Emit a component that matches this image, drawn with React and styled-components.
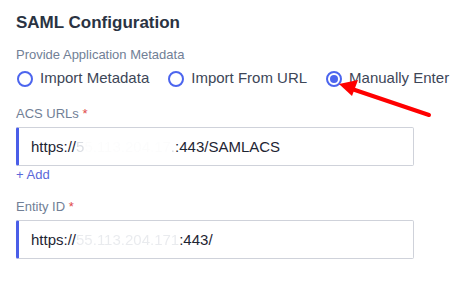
import styled, { createGlobalStyle } from 'styled-components';

const GlobalStyle = createGlobalStyle`
    body {
        margin: 0;
        background: #fff;
        font-family: "Liberation Sans", Arial, sans-serif;
    }
`;

export default function App() {
    return (
        <Page>
            <GlobalStyle />
            <Title>SAML Configuration</Title>

            <GroupLabel>Provide Application Metadata</GroupLabel>
            <RadioRow>
                <RadioOption>
                    <RadioCircle />
                    Import Metadata
                </RadioOption>
                <RadioOption>
                    <RadioCircle />
                    Import From URL
                </RadioOption>
                <RadioOption>
                    <RadioCircle checked />
                    Manually Enter
                </RadioOption>
            </RadioRow>

            <FieldLabel top={18}>ACS URLs <Star>*</Star></FieldLabel>
            <InputBox>
                https://<Hidden fade={0.3}>5</Hidden><Hidden fade={0.02}>5.113.204.17</Hidden><Hidden fade={0.3}>.</Hidden>:443/SAMLACS
            </InputBox>
            <AddLink>+ Add</AddLink>

            <FieldLabel top={16}>Entity ID <Star>*</Star></FieldLabel>
            <InputBox>
                https://<Hidden fade={0.18}>55.113.204.171</Hidden>:443/
            </InputBox>

            <Arrow width="460" height="284" viewBox="0 0 460 284">
                <line x1="429" y1="115" x2="352" y2="89" stroke="#f00" strokeWidth="4" strokeLinecap="round" />
                <polygon points="339,84 358,80 352,96" fill="#f00" />
            </Arrow>
        </Page>
    );
}

const Page = styled.div`
    position: relative;
    width: 460px;
    height: 284px;
    padding: 13px 16px 0;
    box-sizing: border-box;
    display: flex;
    flex-direction: column;
`;

const Title = styled.h2`
    margin: 0;
    font-size: 17px;
    line-height: 20px;
    font-weight: 700;
    color: #2a3342;
`;

const GroupLabel = styled.div`
    margin-top: 14px;
    font-size: 13px;
    line-height: 16px;
    color: #718096;
`;

const RadioRow = styled.div`
    display: flex;
    align-items: center;
    gap: 18px;
    margin-top: 5px;
    height: 20px;
`;

const RadioOption = styled.label`
    display: flex;
    align-items: center;
    gap: 7px;
    margin-left: 1px;
    font-size: 15px;
    line-height: 18px;
    color: #3d4657;
    white-space: nowrap;
    flex-shrink: 0;
`;

const RadioCircle = styled.span`
    position: relative;
    width: 16px;
    height: 16px;
    box-sizing: border-box;
    border: 2px solid #4c65ee;
    border-radius: 50%;
    margin-top: 2px;
    flex-shrink: 0;

    &::after {
        content: "";
        display: ${p => (p.checked ? 'block' : 'none')};
        position: absolute;
        inset: 2px;
        border-radius: 50%;
        background: #4c65ee;
    }
`;

const FieldLabel = styled.div`
    margin-top: ${p => p.top}px;
    font-size: 13px;
    line-height: 16px;
    color: #718096;
`;

const Star = styled.span`
    color: #e04848;
`;

const InputBox = styled.div`
    margin-top: 5px;
    width: 398px;
    height: 39px;
    box-sizing: border-box;
    display: flex;
    align-items: center;
    padding-left: 12px;
    border: 1px solid #cfd2da;
    border-left: 3px solid #4a5ee8;
    border-radius: 2px;
    font-size: 15px;
    color: #1e2533;
    white-space: pre;
`;

const Hidden = styled.span`
    opacity: ${p => p.fade};
    filter: blur(0.6px);
    color: #8a94a6;
`;

const AddLink = styled.div`
    margin-top: 1px;
    font-size: 13px;
    line-height: 16px;
    color: #5a68d9;
`;

const Arrow = styled.svg`
    position: absolute;
    left: 0;
    top: 0;
    pointer-events: none;
`;
